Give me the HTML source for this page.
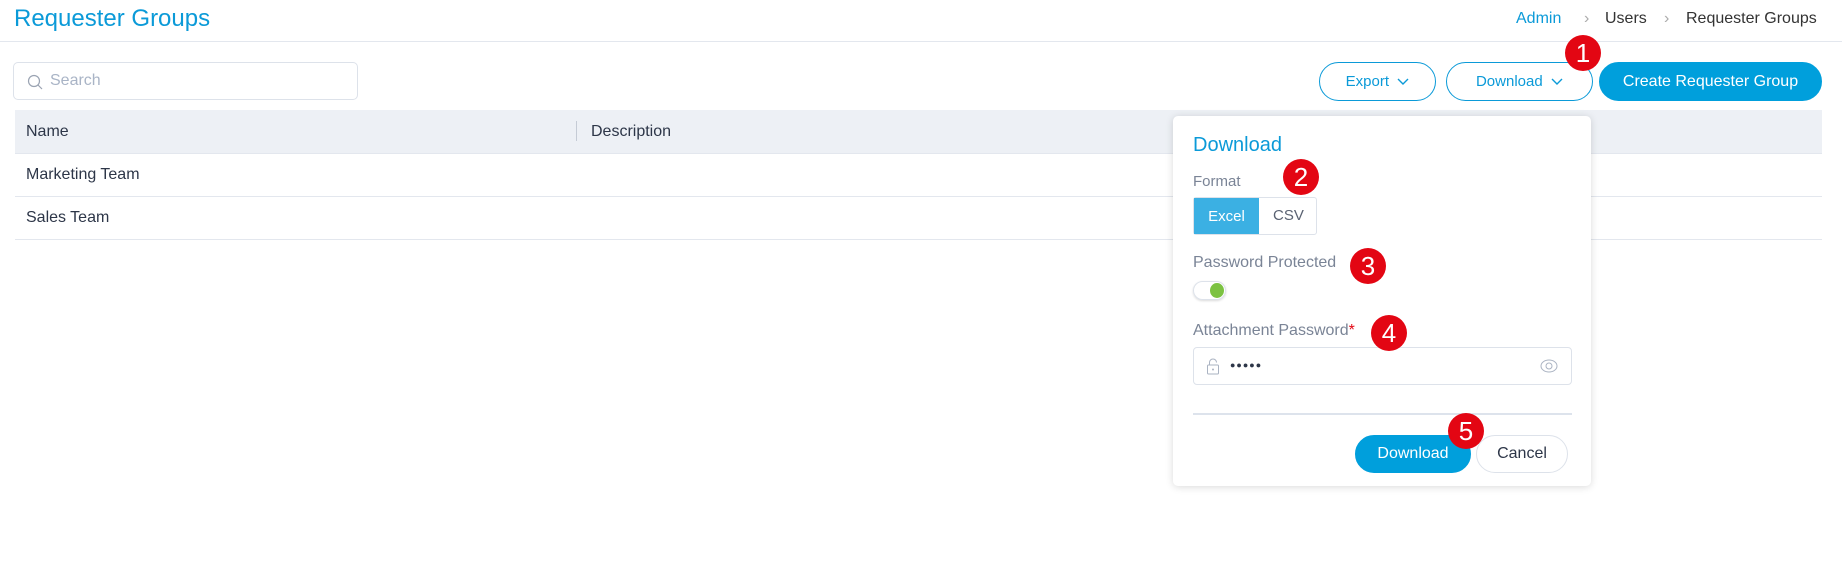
<!DOCTYPE html>
<html><head><meta charset="utf-8"><style>
*{box-sizing:border-box;margin:0;padding:0}
body{width:1842px;height:578px;background:#fff;font-family:"Liberation Sans",sans-serif;position:relative;overflow:hidden;color:#2d3648}
.a{position:absolute}
.title{left:14px;top:5px;font-size:24px;color:#0b9ad8}
.hl{left:0;top:41px;width:1842px;height:1px;background:#e3e7ee}
.bc{top:10px;font-size:16px;color:#333}
.btn{border:1px solid #0b9ad8;border-radius:20px;color:#0b9ad8;font-size:15px;display:flex;align-items:center;justify-content:center}
.badge{width:36px;height:36px;border-radius:50%;background:#e30613;color:#fff;font-size:26px;display:flex;align-items:center;justify-content:center}
.lbl{font-size:15px;color:#7a8496}
</style></head><body>
<div class="a title">Requester Groups</div>
<div class="a hl"></div>
<div class="a bc" style="left:1516px;color:#0b9ad8">Admin</div>
<div class="a bc" style="left:1584px;color:#aaa">&#x203A;</div>
<div class="a bc" style="left:1605px">Users</div>
<div class="a bc" style="left:1664px;color:#aaa">&#x203A;</div>
<div class="a bc" style="left:1686px">Requester Groups</div>

<div class="a" style="left:13px;top:62px;width:345px;height:38px;border:1px solid #dde2ea;border-radius:5px"></div>
<svg class="a" style="left:27px;top:74px" width="16" height="16" viewBox="0 0 16 16"><circle cx="7" cy="7" r="5.5" fill="none" stroke="#9aa3b2" stroke-width="1.2"/><path d="M11 11l4 4" stroke="#9aa3b2" stroke-width="1.2"/></svg>
<div class="a" style="left:50px;top:72px;font-size:16px;color:#a9b4c6">Search</div>

<div class="a btn" style="left:1319px;top:62px;width:117px;height:39px">Export &nbsp;<svg width="12" height="8" viewBox="0 0 12 8"><path d="M1 1l5 5 5-5" fill="none" stroke="#0b9ad8" stroke-width="1.4"/></svg></div>
<div class="a btn" style="left:1446px;top:62px;width:147px;height:39px">Download &nbsp;<svg width="12" height="8" viewBox="0 0 12 8"><path d="M1 1l5 5 5-5" fill="none" stroke="#0b9ad8" stroke-width="1.4"/></svg></div>
<div class="a btn" style="left:1599px;top:62px;width:223px;height:39px;background:#009fdc;border-color:#009fdc;color:#fff;font-size:16px">Create Requester Group</div>

<div class="a" style="left:15px;top:110px;width:1807px;height:43px;background:#edf0f5"></div>
<div class="a" style="left:26px;top:123px;font-size:16px">Name</div>
<div class="a" style="left:576px;top:121px;width:1px;height:20px;background:#c5cbd5"></div>
<div class="a" style="left:591px;top:123px;font-size:16px">Description</div>
<div class="a" style="left:15px;top:153px;width:1807px;height:1px;background:#e3e7ee"></div>
<div class="a" style="left:26px;top:166px;font-size:16px">Marketing Team</div>
<div class="a" style="left:15px;top:196px;width:1807px;height:1px;background:#e3e7ee"></div>
<div class="a" style="left:26px;top:209px;font-size:16px">Sales Team</div>
<div class="a" style="left:15px;top:239px;width:1807px;height:1px;background:#e3e7ee"></div>

<div class="a" style="left:1173px;top:116px;width:418px;height:370px;background:#fff;border-radius:5px;box-shadow:0 1px 8px rgba(0,0,0,.15)"></div>
<div class="a" style="left:1193px;top:134px;font-size:20px;color:#0b9ad8">Download</div>
<div class="a lbl" style="left:1193px;top:173px">Format</div>
<div class="a" style="left:1193px;top:197px;width:124px;height:38px;border:1px solid #dde2ea;border-radius:3px"></div>
<div class="a" style="left:1194px;top:198px;width:65px;height:36px;background:#3bb0e3;color:#fff;font-size:15px;display:flex;align-items:center;justify-content:center">Excel</div>
<div class="a" style="left:1273px;top:207px;font-size:15px;color:#5a6272">CSV</div>
<div class="a lbl" style="left:1193px;top:254px;font-size:16px">Password Protected</div>
<div class="a" style="left:1193px;top:281px;width:33px;height:19px;border:1px solid #dde2ea;border-radius:10px;box-shadow:0 1px 2px rgba(0,0,0,.15)"></div>
<div class="a" style="left:1210px;top:283px;width:14px;height:15px;border-radius:50%;background:#7cc242"></div>
<div class="a lbl" style="left:1193px;top:322px;font-size:16px">Attachment Password<span style="color:#e30613">*</span></div>
<div class="a" style="left:1193px;top:347px;width:379px;height:38px;border:1px solid #dde2ea;border-radius:4px"></div>
<svg class="a" style="left:1206px;top:358px" width="14" height="17" viewBox="0 0 14 17"><rect x="1.5" y="7" width="11" height="9" rx="1" fill="none" stroke="#aab3c2"/><path d="M3.5 7V4.5a3.5 3.5 0 0 1 7 0" fill="none" stroke="#aab3c2"/><circle cx="7" cy="11.5" r="1" fill="#aab3c2"/></svg>
<div class="a" style="left:1230px;top:360px;font-size:9px;letter-spacing:1px;color:#2d3648">●●●●●</div>
<svg class="a" style="left:1540px;top:358px" width="18" height="16" viewBox="0 0 18 16"><ellipse cx="9" cy="8" rx="8" ry="6" fill="none" stroke="#aab3c2"/><circle cx="9" cy="8" r="3" fill="none" stroke="#aab3c2"/></svg>
<div class="a" style="left:1193px;top:413px;width:379px;height:2px;background:#dde3ec"></div>
<div class="a btn" style="left:1355px;top:435px;width:116px;height:38px;background:#009fdc;border-color:#009fdc;color:#fff;font-size:16px">Download</div>
<div class="a btn" style="left:1476px;top:435px;width:92px;height:38px;border-color:#dde2ea;color:#2d3648;font-size:16px">Cancel</div>

<div class="a badge" style="left:1565px;top:35px">1</div>
<div class="a badge" style="left:1283px;top:159px">2</div>
<div class="a badge" style="left:1350px;top:248px">3</div>
<div class="a badge" style="left:1371px;top:315px">4</div>
<div class="a badge" style="left:1448px;top:413px">5</div>
</body></html>
